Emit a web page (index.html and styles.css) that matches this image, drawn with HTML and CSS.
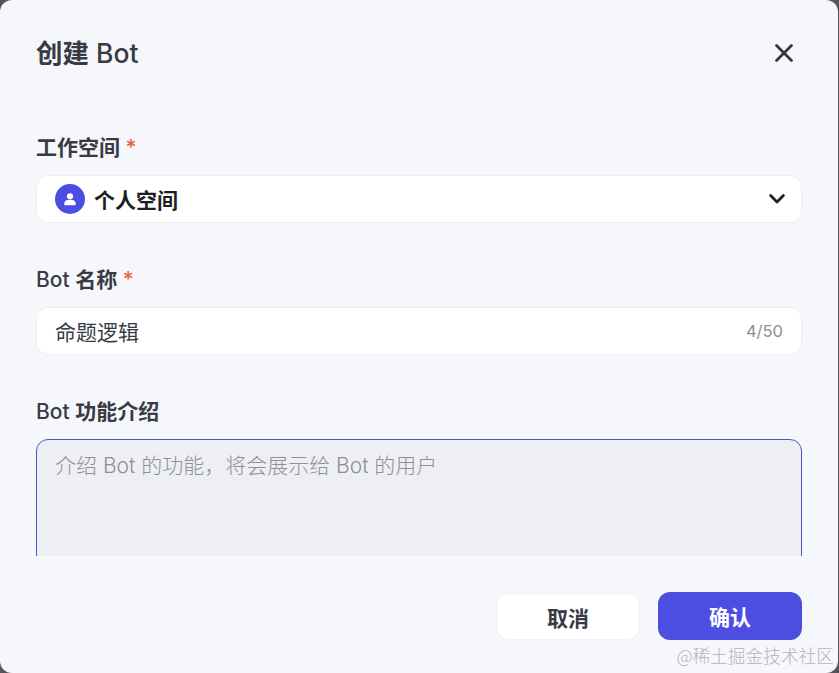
FILE: index.html
```html
<!DOCTYPE html>
<html lang="zh-CN">
<head>
<meta charset="utf-8">
<title>创建 Bot</title>
<link rel="stylesheet" href="styles.css">
</head>
<body>
<div class="modal">
  <header class="modal-head">
    <h1 class="modal-title"><span class="cjk">创建</span> Bot</h1>
    <svg class="close-icon" width="24" height="24" viewBox="0 0 24 24"><path d="M4.5 4.5 19.5 19.5M19.5 4.5 4.5 19.5" fill="none" stroke="#33353f" stroke-width="2.8" stroke-linecap="round"/></svg>
  </header>
  <div class="modal-body">
    <section class="field">
      <div class="label"><span class="cjk">工作空间</span> <span class="req">*</span></div>
      <div class="control select">
        <span class="avatar">
          <svg width="30" height="30" viewBox="0 0 30 30"><circle cx="15" cy="12.3" r="3.1" fill="#fff"/><path d="M9.2 20.2c0-2.7 1.7-4.2 3.6-4.2h4.4c1.9 0 3.6 1.5 3.6 4.2 0 .7-.4 1.1-1.1 1.1h-9.4c-.7 0-1.1-.4-1.1-1.1z" fill="#fff"/></svg>
        </span>
        <span class="select-text">个人空间</span>
        <svg class="chevron" width="18" height="18" viewBox="0 0 18 18"><path d="M2.6 5.6 9 12l6.4-6.4" fill="none" stroke="#1f2026" stroke-width="2.8" stroke-linecap="round" stroke-linejoin="round"/></svg>
      </div>
    </section>
    <section class="field">
      <div class="label">Bot <span class="cjk">名称</span> <span class="req">*</span></div>
      <div class="control input">
        <span class="input-text">命题逻辑</span>
        <span class="count">4/50</span>
      </div>
    </section>
    <section class="field">
      <div class="label">Bot <span class="cjk">功能介绍</span></div>
      <div class="textarea">介绍 Bot 的功能，将会展示给 Bot 的用户</div>
    </section>
  </div>
  <footer class="modal-foot">
    <button class="btn btn-cancel" type="button">取消</button>
    <button class="btn btn-ok" type="button">确认</button>
  </footer>
  <div class="watermark">@稀土掘金技术社区</div>
</div>
</body>
</html>
```
FILE: styles.css
```css
* { box-sizing: border-box; }
html, body { margin: 0; height: 100%; }
body {
  background: #55565c;
  overflow: hidden;
  font-family: Inter, "Noto Sans CJK SC", "Noto Sans", sans-serif;
}
.modal {
  position: relative;
  width: 838px;
  height: 673px;
  background: #f6f7fb;
  border-radius: 12px;
  padding: 0 36px;
  display: flex;
  flex-direction: column;
}
.modal-head {
  height: 108px;
  padding-top: 35px;
  display: flex;
  justify-content: space-between;
  align-items: flex-start;
}
.modal-title {
  margin: 0;
  font-size: 26.5px;
  line-height: 36px;
  font-weight: 500;
  color: #383a44;
}
.cjk { font-weight: 700; }
.close-icon { margin: 6px 6px 0 0; }
.modal-body {
  height: 448px;
  overflow: hidden;
  flex: none;
}
.field { margin-bottom: 17px; }
.label {
  height: 67px;
  padding-top: 26px;
  font-size: 21px;
  line-height: 28px;
  font-weight: 500;
  color: #383a44;
}
.req { color: #ef5b42; }
.control {
  height: 48px;
  background: #fff;
  border: 1px solid #eeeff4;
  border-radius: 12px;
  display: flex;
  align-items: center;
  padding: 0 15px 0 18px;
}
.avatar {
  width: 30px;
  height: 30px;
  border-radius: 50%;
  background: #4c4ee2;
  flex: none;
  display: flex;
}
.select-text {
  margin-left: 9px;
  font-size: 21px;
  font-weight: 700;
  color: #1d1e24;
  flex: 1;
}
.input-text {
  font-size: 21px;
  color: #383a44;
  flex: 1;
}
.count { font-size: 16.5px; color: #8d8e96; margin-right: 3px; }
.textarea {
  height: 140px;
  background: #eeeff4;
  border: 1px solid #5252d0;
  border-radius: 12px;
  padding: 11px 18px;
  font-size: 21px;
  line-height: 30px;
  font-weight: 300;
  color: #8f9096;
}
.modal-foot {
  flex: 1;
  display: flex;
  justify-content: flex-end;
  align-items: flex-start;
  gap: 18px;
  padding-top: 36px;
}
.btn {
  width: 144px;
  height: 48px;
  border-radius: 12px;
  border: 0;
  font-family: inherit;
  font-size: 21px;
  font-weight: 700;
  padding: 0;
}
.btn-cancel {
  background: #fff;
  color: #383a44;
  border: 1px solid #f0f1f6;
  height: 47px;
  margin-top: 1px;
}
.btn-ok { background: #4c4ee2; color: #fff; }
.watermark {
  position: absolute;
  right: 4px;
  bottom: 6px;
  font-family: "Noto Sans CJK SC", sans-serif;
  font-size: 17.7px;
  line-height: 24px;
  font-weight: 300;
  color: #b3b4ba;
}
```
